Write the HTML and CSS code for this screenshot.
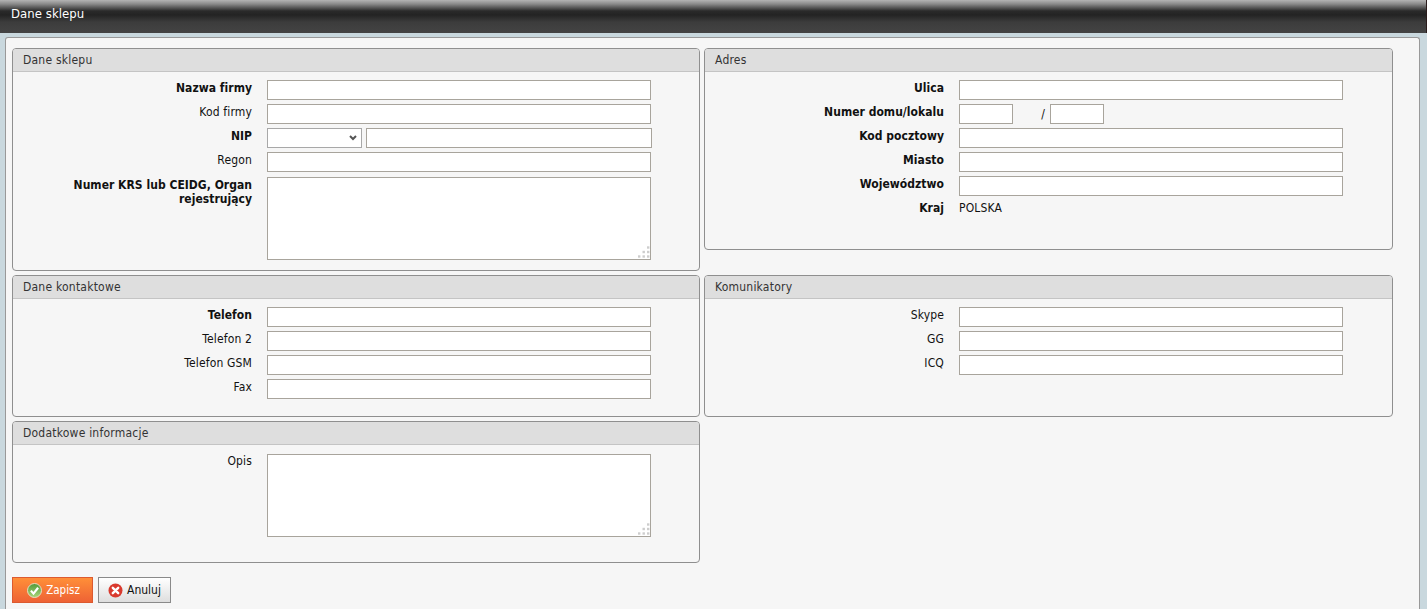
FILE: index.html
```html
<!DOCTYPE html>
<html lang="pl">
<head>
<meta charset="utf-8">
<title>Dane sklepu</title>
<link rel="stylesheet" href="styles.css">
</head>
<body>
<header class="topbar">Dane sklepu</header>
<main class="panel">
  <div class="boxes">
    <section class="box">
      <h2 class="box-title">Dane sklepu</h2>
      <div class="rows">
        <label class="lbl req">Nazwa firmy</label><input class="field" type="text">
        <label class="lbl">Kod firmy</label><input class="field" type="text">
        <label class="lbl req">NIP</label>
        <div class="nip"><select class="sel"><option></option></select><input class="field nip-num" type="text"></div>
        <label class="lbl">Regon</label><input class="field" type="text">
        <label class="lbl req krs">Numer KRS lub CEIDG, Organ rejestrujący</label>
        <div class="area-wrap krs"><textarea class="area"></textarea>
          <svg class="grip" width="14" height="14" viewBox="0 0 14 14"><g fill="#cdcdcd"><rect x="10" y="0.3" width="2.4" height="2.4"/><rect x="5.5" y="4.8" width="2.4" height="2.4"/><rect x="10" y="4.8" width="2.4" height="2.4"/><rect x="1" y="9.3" width="2.4" height="2.4"/><rect x="5.5" y="9.3" width="2.4" height="2.4"/><rect x="10" y="9.3" width="2.4" height="2.4"/></g></svg>
        </div>
      </div>
    </section>
    <section class="box">
      <h2 class="box-title">Adres</h2>
      <div class="rows addr">
        <label class="lbl req">Ulica</label><input class="field" type="text">
        <label class="lbl req">Numer domu/lokalu</label>
        <div class="house"><input class="field short" type="text"><span class="slash">/</span><input class="field short" type="text"></div>
        <label class="lbl req">Kod pocztowy</label><input class="field" type="text">
        <label class="lbl req">Miasto</label><input class="field" type="text">
        <label class="lbl req">Województwo</label><input class="field" type="text">
        <label class="lbl req">Kraj</label><div class="value">POLSKA</div>
      </div>
    </section>
    <section class="box">
      <h2 class="box-title">Dane kontaktowe</h2>
      <div class="rows contact">
        <label class="lbl req">Telefon</label><input class="field" type="text">
        <label class="lbl">Telefon 2</label><input class="field" type="text">
        <label class="lbl">Telefon GSM</label><input class="field" type="text">
        <label class="lbl">Fax</label><input class="field" type="text">
      </div>
    </section>
    <section class="box">
      <h2 class="box-title">Komunikatory</h2>
      <div class="rows contact">
        <label class="lbl">Skype</label><input class="field" type="text">
        <label class="lbl">GG</label><input class="field" type="text">
        <label class="lbl">ICQ</label><input class="field" type="text">
      </div>
    </section>
    <section class="box">
      <h2 class="box-title">Dodatkowe informacje</h2>
      <div class="rows contact opis">
        <label class="lbl opis-lbl">Opis</label>
        <div class="area-wrap"><textarea class="area"></textarea>
          <svg class="grip" width="14" height="14" viewBox="0 0 14 14"><g fill="#cdcdcd"><rect x="10" y="0.3" width="2.4" height="2.4"/><rect x="5.5" y="4.8" width="2.4" height="2.4"/><rect x="10" y="4.8" width="2.4" height="2.4"/><rect x="1" y="9.3" width="2.4" height="2.4"/><rect x="5.5" y="9.3" width="2.4" height="2.4"/><rect x="10" y="9.3" width="2.4" height="2.4"/></g></svg>
        </div>
      </div>
    </section>
  </div>
  <div class="actions">
    <button class="btn btn-save" type="button">
      <svg width="15" height="15" viewBox="0 0 15 15"><defs><linearGradient id="ok" x1="0" y1="0" x2="0" y2="1"><stop offset="0" stop-color="#4f9a3a"/><stop offset="1" stop-color="#a9d67a"/></linearGradient></defs><circle cx="7.5" cy="7.5" r="7" fill="url(#ok)" stroke="#ecd9c0"/><path d="M3.9 7.6l2.6 3 4.6-5.8" fill="none" stroke="#fff" stroke-width="2.2"/></svg>
      Zapisz
    </button>
    <button class="btn btn-cancel" type="button">
      <svg width="15" height="15" viewBox="0 0 15 15"><circle cx="7.5" cy="7.5" r="7" fill="#d93a2e"/><path d="M4.8 4.8l5.4 5.4M10.2 4.8l-5.4 5.4" stroke="#fff" stroke-width="2.4" stroke-linecap="round"/></svg>
      Anuluj
    </button>
  </div>
</main>
</body>
</html>
```
FILE: styles.css
```css
* { box-sizing: border-box; }
body {
  margin: 0;
  height: 609px;
  overflow: hidden;
  background: #c9d8de;
  font-family: "DejaVu Sans Condensed", "DejaVu Sans", sans-serif;
  font-size: 12px;
  letter-spacing: 0.15px;
  color: #111;
  display: flex;
  flex-direction: column;
}
.topbar {
  height: 33px;
  flex: none;
  padding: 5px 11px 0;
  font-size: 13px;
  letter-spacing: 0.05px;
  line-height: 18px;
  color: #fff;
  background: linear-gradient(#b4b4b4 0, #8a8a8a 4px, #2a2a2a 11px, #232323 15px, #3c3c3c 22px, #444 33px);
  border-right: 1px solid #2a1c1c;
}
.panel {
  flex: 1;
  margin: 4px 7px 0 5px;
  padding: 10px 6px 0;
  background: #f6f6f6;
  border: 1px solid #999;
  border-bottom: 0;
  border-radius: 3px 3px 0 0;
}
.boxes {
  display: grid;
  grid-template-columns: 688px 689px;
  gap: 4px;
  align-items: start;
}
.box {
  border: 1px solid #8f8f8f;
  border-radius: 4px;
  overflow: hidden;
}
.box-title {
  margin: 0;
  height: 23px;
  padding-left: 10px;
  font-size: 12px;
  font-weight: 400;
  letter-spacing: 0.22px;
  line-height: 22px;
  color: #333;
  background: #dedede;
  border-bottom: 1px solid #c4c4c4;
}
.rows {
  display: grid;
  grid-template-columns: 239px 386px;
  column-gap: 15px;
  row-gap: 4px;
  padding: 8px 0 10px;
  align-items: start;
  align-content: start;
}
.addr { height: 177px; }
.contact { height: 117px; }
.opis { padding-top: 9px; }
.lbl {
  text-align: right;
  line-height: 14px;
  padding-top: 1px;
  min-height: 20px;
}
.opis-lbl { padding-top: 0; }
.req { font-weight: 700; letter-spacing: 0.03px; }
.krs { margin-top: 1px; }
.field {
  display: block;
  width: 384px;
  height: 20px;
  margin: 0;
  padding: 0 3px;
  background: #fff;
  border: 1px solid #a8a49c;
  border-radius: 0;
}
.nip { display: flex; gap: 4px; }
.sel {
  width: 95px;
  height: 20px;
  appearance: none;
  background: #fff url("data:image/svg+xml,%3Csvg xmlns='http://www.w3.org/2000/svg' width='8' height='6'%3E%3Cpath d='M1 1l3 3 3-3' fill='none' stroke='%23555' stroke-width='2'/%3E%3C/svg%3E") no-repeat right 4px center;
  border: 1px solid #a8a8a8;
  border-radius: 0;
}
.field.nip-num { width: 286px; }
.house { display: flex; }
.field.short { width: 54px; }
.slash { width: 37px; text-align: right; padding-right: 5px; line-height: 20px; }
.value { line-height: 14px; padding-top: 1px; font-size: 12px; }
.area-wrap { position: relative; width: 384px; height: 83px; }
.area {
  display: block;
  width: 100%;
  height: 100%;
  resize: none;
  background: #fff;
  border: 1px solid #a8a49c;
  border-radius: 0;
}
.grip { position: absolute; right: 0; bottom: 0; }
.actions { display: flex; gap: 5px; margin-top: 14px; }
.btn {
  height: 26px;
  padding: 0;
  display: flex;
  align-items: center;
  justify-content: center;
  gap: 4px;
  font: inherit;
  letter-spacing: 0;
}
.btn-save {
  width: 81px;
  padding-left: 2px;
  font-size: 11.5px;
  color: #fff;
  border: 1px solid #dc5a30;
  background: linear-gradient(#ff8f38, #ee6235);
}
.btn-cancel {
  width: 73px;
  color: #111;
  border: 1px solid #8a8a8a;
  background: linear-gradient(#ffffff, #dedede);
}
```
